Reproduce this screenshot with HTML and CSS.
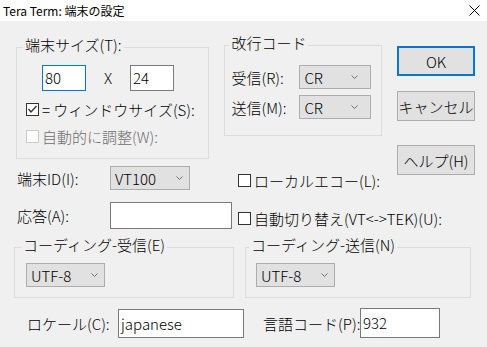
FILE: index.html
```html
<!DOCTYPE html>
<html lang="ja">
<head>
<meta charset="utf-8">
<title>Tera Term: 端末の設定</title>
<link rel="stylesheet" href="styles.css">
</head>
<body>
<div class="window">
  <div class="titlebar">
    <span class="title">Tera Term: 端末の設定</span>
    <svg class="close" width="11" height="11" viewBox="0 0 11 11"><path d="M0.5 0.5 L10.5 10.5 M10.5 0.5 L0.5 10.5" stroke="#000" stroke-width="1" fill="none"/></svg>
  </div>
  <div class="main">
    <div class="top">
      <div class="left">
        <div class="row-a">
          <div class="group group-size">
            <div class="group-title">端末サイズ(T):</div>
            <div class="size-row">
              <div class="field field-focus w44">80</div>
              <span class="times">X</span>
              <div class="field w44">24</div>
            </div>
            <div class="check-row">
              <span class="checkbox"><svg width="11" height="11" viewBox="0 0 11 11"><path d="M1.5 5 L4 8 L9.5 2" stroke="#333" stroke-width="1.3" fill="none"/></svg></span>
              <span>= ウィンドウサイズ(S):</span>
            </div>
            <div class="check-row check-row-2 disabled">
              <span class="checkbox"></span>
              <span>自動的に調整(W):</span>
            </div>
          </div>
          <div class="group group-newline">
            <div class="group-title">改行コード</div>
            <div class="nl-row">
              <span class="nl-label">受信(R):</span>
              <div class="select select-cr"><span>CR</span><svg width="7" height="4" viewBox="0 0 7 4"><path d="M0.5 0.5 L3.5 3.5 L6.5 0.5" stroke="#707070" fill="none"/></svg></div>
            </div>
            <div class="nl-row nl-row-2">
              <span class="nl-label">送信(M):</span>
              <div class="select select-cr"><span>CR</span><svg width="7" height="4" viewBox="0 0 7 4"><path d="M0.5 0.5 L3.5 3.5 L6.5 0.5" stroke="#707070" fill="none"/></svg></div>
            </div>
          </div>
        </div>
        <div class="row-b">
          <div class="term-col">
            <div class="term-row">
              <span class="term-label">端末ID(I):</span>
              <div class="select select-id"><span>VT100</span><svg width="7" height="4" viewBox="0 0 7 4"><path d="M0.5 0.5 L3.5 3.5 L6.5 0.5" stroke="#707070" fill="none"/></svg></div>
            </div>
            <div class="term-row term-row-2">
              <span class="term-label">応答(A):</span>
              <div class="field field-answer"></div>
            </div>
          </div>
          <div class="check-col">
            <div class="check-row">
              <span class="checkbox"></span>
              <span>ローカルエコー(L):</span>
            </div>
            <div class="check-row check-row-b2">
              <span class="checkbox"></span>
              <span>自動切り替え(VT&lt;-&gt;TEK)(U):</span>
            </div>
          </div>
        </div>
      </div>
      <div class="buttons">
        <div class="btn btn-default">OK</div>
        <div class="btn btn-cancel">キャンセル</div>
        <div class="btn btn-help">ヘルプ(H)</div>
      </div>
    </div>
    <div class="row-c">
      <div class="group group-recv">
        <div class="group-title">コーディング-受信(E)</div>
        <div class="select select-utf"><span>UTF-8</span><svg width="7" height="4" viewBox="0 0 7 4"><path d="M0.5 0.5 L3.5 3.5 L6.5 0.5" stroke="#707070" fill="none"/></svg></div>
      </div>
      <div class="group group-send">
        <div class="group-title">コーディング-送信(N)</div>
        <div class="select select-utf"><span>UTF-8</span><svg width="7" height="4" viewBox="0 0 7 4"><path d="M0.5 0.5 L3.5 3.5 L6.5 0.5" stroke="#707070" fill="none"/></svg></div>
      </div>
    </div>
    <div class="row-d">
      <span class="locale-label">ロケール(C):</span>
      <div class="field field-locale">japanese</div>
      <span class="lang-label">言語コード(P):</span>
      <div class="field field-lang">932</div>
    </div>
  </div>
</div>
</body>
</html>
```
FILE: styles.css
```css
* { box-sizing: border-box; }
body {
  margin: 0;
  background: #f0f0f0;
  font-family: "Noto Sans CJK JP", "Liberation Sans", sans-serif;
  font-weight: 300;
  font-size: 15px;
  color: #000;
}
.window { width: 487px; height: 347px; overflow: hidden; background: #f0f0f0; }
.titlebar {
  height: 21px;
  background: #fff;
  display: flex;
  align-items: center;
  justify-content: space-between;
  padding: 0 7px 0 3px;
  font-size: 12px;
  font-weight: 400;
}
.close { display: block; }

.top { display: flex; }
.left { width: 382px; display: flex; flex-direction: column; }
.row-a { display: flex; align-items: flex-start; }

.group { border: 1px solid #dcdcdc; }
.group-title {
  width: fit-content;
  background: #f0f0f0;
  padding: 0 2px;
  line-height: 16px;
  margin-top: -11px;
  white-space: nowrap;
}

.group-size { margin: 26px 0 0 16px; width: 194px; height: 112px; }
.group-size .group-title { margin-left: 6px; }
.size-row { display: flex; margin: 12px 0 0 25px; }
.field {
  height: 26px;
  border: 1px solid #7a7a7a;
  background: #fff;
  padding-left: 2px;
  line-height: 24px;
  white-space: nowrap;
}
.field-focus { border-color: #0078d7; }
.w44 { width: 44px; }
.times { width: 44px; text-align: center; line-height: 26px; }

.check-row { display: flex; align-items: center; height: 16px; gap: 3px; white-space: nowrap; }
.group-size .check-row { margin: 10px 0 0 9px; }
.group-size .check-row-2 { margin-top: 11px; }
.checkbox {
  width: 13px;
  height: 13px;
  flex: none;
  border: 1px solid #333;
  background: #fff;
  display: flex;
  align-items: center;
  justify-content: center;
}
.disabled { color: #6d6d6d; }
.disabled .checkbox { border-color: #cccccc; }

.group-newline { margin: 24px 0 0 15px; width: 158px; height: 91px; }
.group-newline .group-title { margin-left: 4px; }
.nl-row { display: flex; align-items: center; margin: 14px 0 0 6px; }
.nl-row-2 { margin-top: 6px; }
.nl-label { width: 68px; white-space: nowrap; }

.select {
  display: flex;
  align-items: center;
  justify-content: space-between;
  height: 24px;
  background: #e1e1e1;
  border: 1px solid #adadad;
  padding: 0 6px 0 4px;
}
.select-cr { width: 72px; padding-right: 12px; }
.select-id { width: 80px; }
.select-utf { width: 79px; }

.row-b { display: flex; }
.term-col { width: 240px; padding-left: 17px; }
.term-row { display: flex; align-items: center; margin-top: 7px; }
.term-row-2 { margin-top: 12px; }
.term-label { width: 93px; white-space: nowrap; }
.field-answer { width: 122px; height: 27px; }
.check-col { margin-left: 6px; }
.check-col .check-row { margin-top: 13px; }
.check-col .check-row-b2 { margin-top: 22px; }

.buttons { display: flex; flex-direction: column; margin-left: 15px; padding-top: 25px; width: 78px; }
.btn {
  height: 30px;
  background: #e1e1e1;
  border: 1px solid #adadad;
  display: flex;
  align-items: center;
  justify-content: center;
  white-space: nowrap;
}
.btn-default { border: 2px solid #0078d7; }
.btn-cancel { margin-top: 15px; }
.btn-help { margin-top: 24px; }

.row-c { display: flex; margin-top: 18px; }
.group-recv { margin-left: 14px; width: 220px; height: 51px; }
.group-recv .group-title { margin-left: 6px; }
.group-recv .select { margin: 10px 0 0 11px; }
.group-send { margin-left: 11px; width: 226px; height: 51px; }
.group-send .group-title { margin-left: 3px; }
.group-send .select { margin: 10px 0 0 10px; }

.row-d { display: flex; align-items: center; margin-top: 10px; padding-left: 27px; }
.locale-label { width: 91px; white-space: nowrap; }
.field-locale { width: 126px; height: 29px; line-height: 27px; }
.lang-label { margin-left: 19px; width: 97px; white-space: nowrap; }
.field-lang { width: 80px; height: 30px; line-height: 28px; }
```
